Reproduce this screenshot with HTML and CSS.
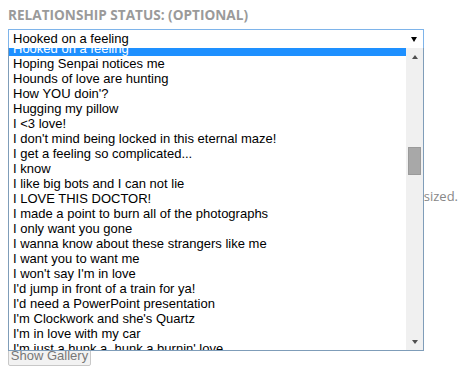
FILE: index.html
```html
<!DOCTYPE html>
<html>
<head>
    <meta charset="UTF-8">
    <link rel="stylesheet" href="styles.css">
</head>
<body>
    <div class="field">
        <div class="label">Relationship Status: (Optional)</div>
        <div class="select">
            <span class="select-value">Hooked on a feeling</span>
            <span class="select-arrow"></span>
        </div>

        <div class="listbox">
            <div class="options">
                <ul class="option-list">
                    <li class="selected">Hooked on a feeling</li>
                    <li>Hoping Senpai notices me</li>
                    <li>Hounds of love are hunting</li>
                    <li>How YOU doin'?</li>
                    <li>Hugging my pillow</li>
                    <li>I &lt;3 love!</li>
                    <li>I don't mind being locked in this eternal maze!</li>
                    <li>I get a feeling so complicated...</li>
                    <li>I know</li>
                    <li>I like big bots and I can not lie</li>
                    <li>I LOVE THIS DOCTOR!</li>
                    <li>I made a point to burn all of the photographs</li>
                    <li>I only want you gone</li>
                    <li>I wanna know about these strangers like me</li>
                    <li>I want you to want me</li>
                    <li>I won't say I'm in love</li>
                    <li>I'd jump in front of a train for ya!</li>
                    <li>I'd need a PowerPoint presentation</li>
                    <li>I'm Clockwork and she's Quartz</li>
                    <li>I'm in love with my car</li>
                    <li>I'm just a hunk a, hunk a burnin' love</li>
                    <li>I'm lovin' it</li>
                </ul>
            </div>
            <div class="scrollbar">
                <div class="scroll-btn"><span class="tri-up"></span></div>
                <div class="scroll-track"><div class="scroll-thumb"></div></div>
                <div class="scroll-btn"><span class="tri-down"></span></div>
            </div>
        </div>
    </div>

    <div class="gallery">
        <p class="note">Pictures larger than 500 x 500 will be resized.</p>
        <button class="gallery-btn">Show Gallery</button>
    </div>
</body>
</html>
```

FILE: styles.css
```css
body {
    margin: 0;
    padding: 0 8px;
    font-family: "Liberation Sans", Arial, sans-serif;
    font-size: 13px;
    background: #fff;
}

.field {
    position: relative;
    padding-top: 5px;
}

.label {
    font-family: "Open Sans", sans-serif;
    font-weight: bold;
    font-size: 13.6px;
    line-height: 20px;
    color: #9a9a9a;
    text-transform: uppercase;
    margin-bottom: 4px;
}

.select {
    display: flex;
    align-items: center;
    justify-content: space-between;
    width: 416px;
    height: 20px;
    box-sizing: border-box;
    border: 1px solid #7eb4ea;
    padding: 0 6px 0 4px;
    color: #000;
}

.select-value {
    font-size: 13px;
    line-height: 18px;
}

.select-arrow {
    width: 0;
    height: 0;
    border-left: 3.5px solid transparent;
    border-right: 3.5px solid transparent;
    border-top: 5px solid #000;
    margin-top: 1px;
}

.listbox {
    position: absolute;
    top: 48px;
    left: 0;
    width: 416px;
    height: 303px;
    box-sizing: border-box;
    border: 1px solid #7f9db9;
    border-top: none;
    background: #fff;
    display: flex;
}

.options {
    flex: 1;
    overflow: hidden;
}

.option-list {
    list-style: none;
    margin: -7px 0 0;
    padding: 0;
}

.option-list li {
    height: 15px;
    line-height: 15px;
    padding-left: 4px;
    color: #000;
    white-space: nowrap;
}

.option-list li.selected {
    background: #1e90ff;
    color: #fff;
}

.scrollbar {
    width: 17px;
    background: #f0f0f0;
    display: flex;
    flex-direction: column;
}

.scroll-btn {
    height: 17px;
    display: flex;
    align-items: center;
    justify-content: center;
}

.tri-up, .tri-down {
    width: 0;
    height: 0;
    border-left: 3.5px solid transparent;
    border-right: 3.5px solid transparent;
}

.tri-up {
    border-bottom: 4px solid #505050;
}

.tri-down {
    border-top: 4px solid #505050;
}

.scroll-track {
    flex: 1;
}

.scroll-thumb {
    margin: 82px 2px 0;
    height: 28px;
    box-sizing: border-box;
    background: #a8a8a8;
    border: 1px solid #9a9a9a;
}

.gallery {
    padding-top: 138px;
}

.note {
    font-family: "Open Sans", sans-serif;
    font-size: 13px;
    color: #888;
    margin: 0;
    text-align: right;
    padding-right: 1px;
    line-height: 18px;
}

.gallery-btn {
    margin-top: 139px;
    width: 83px;
    height: 22px;
    font-family: "Liberation Sans", Arial, sans-serif;
    font-size: 13px;
    color: #777;
    background: #f2f2f2;
    border: 1px solid #c8c8c8;
    border-radius: 2px;
    padding: 0;
}
```
